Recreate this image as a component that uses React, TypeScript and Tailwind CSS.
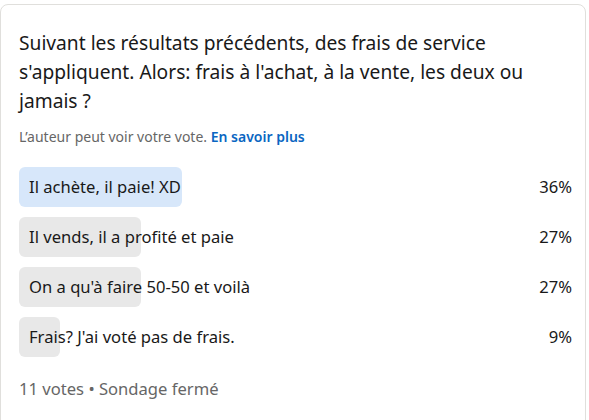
import React from "react";

const options = [
  { label: "Il achète, il paie! XD", pct: 36, w: 163, selected: true },
  { label: "Il vends, il a profité et paie", pct: 27, w: 122, selected: false },
  { label: "On a qu'à faire 50-50 et voilà", pct: 27, w: 122, selected: false },
  { label: "Frais? J'ai voté pas de frais.", pct: 9, w: 41, selected: false },
];

export default function App() {
  return (
    <div
      className="w-[589px] h-[420px] bg-white overflow-hidden pt-[4px]"
      style={{ fontFamily: '"Noto Sans", "Open Sans", sans-serif' }}
    >
      <div className="w-[586px] h-[430px] border border-[#e0dfdc] rounded-[8px] pl-[18px] pr-[13px] pt-[23px]">
        <div className="text-[19.2px] leading-[29px] text-[#191919] pr-[15px]">
          Suivant les résultats précédents, des frais de service s'appliquent. Alors: frais à l'achat, à la vente, les deux ou jamais ?
        </div>
        <div className="mt-[12px] text-[14px] leading-[20px] text-[#666666]">
          L’auteur peut voir votre vote.{" "}
          <span className="text-[#0a66c2] font-semibold">En savoir plus</span>
        </div>
        <div className="mt-[20px] flex flex-col gap-[10px]">
          {options.map((o) => (
            <div key={o.label} className="flex items-center h-[40px]">
              <div className="relative w-[453px] h-[40px] flex items-center">
                <div
                  className={`absolute left-0 top-0 h-[40px] rounded-[6px] ${
                    o.selected ? "bg-[#d7e7fa]" : "bg-[#e8e8e8]"
                  }`}
                  style={{ width: o.w }}
                />
                <span className="relative pl-[10px] text-[16.6px] text-[#191919] whitespace-nowrap">
                  {o.label}
                </span>
              </div>
              <div className="flex-1 text-right text-[16.6px] text-[#191919]">{o.pct}%</div>
            </div>
          ))}
        </div>
        <div className="mt-[20px] text-[16.6px] leading-[24px] text-[#666666]">
          11 votes • Sondage fermé
        </div>
      </div>
    </div>
  );
}
